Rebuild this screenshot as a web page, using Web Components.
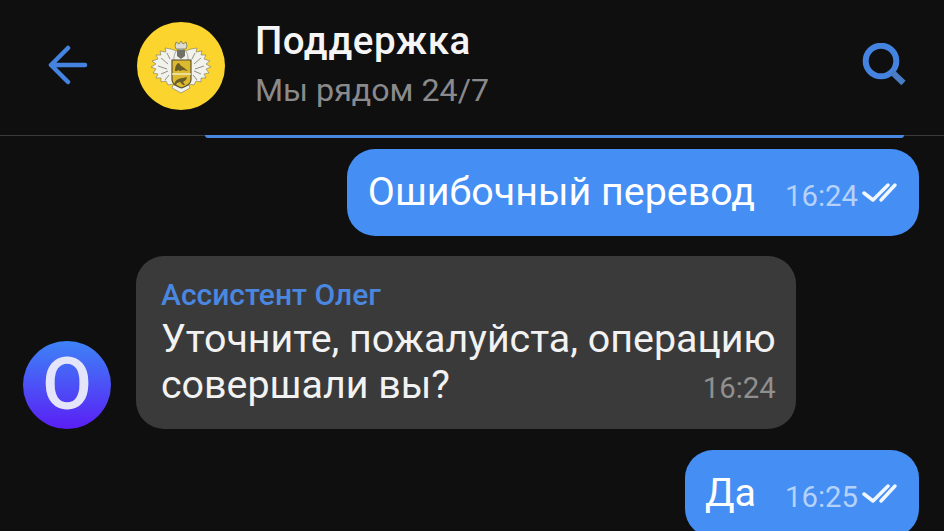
<!DOCTYPE html>
<html>
<head>
<meta charset="utf-8">
<style>
    html, body { margin: 0; padding: 0; height: 531px; overflow: hidden; background: #0f0f10; }
    body { font-family: Roboto, "Noto Sans", sans-serif; display: flex; flex-direction: column; }
</style>
</head>
<body>
<chat-header title="Поддержка" status="Мы рядом 24/7"></chat-header>
<chat-list>
    <chat-strip></chat-strip>
    <chat-bubble mine time="16:24">Ошибочный перевод</chat-bubble>
    <chat-row>
        <bot-avatar slot="avatar">О</bot-avatar>
        <chat-bubble time="16:24" sender="Ассистент Олег">Уточните, пожалуйста, операцию<br>совершали вы?</chat-bubble>
    </chat-row>
    <chat-bubble mine time="16:25" style="--lead: 20px; --meta-gap: 29px">Да</chat-bubble>
</chat-list>

<script>
// Bank crest, drawn by hand
const crest = `
<svg width="88" height="88" viewBox="0 0 88 88">
    <circle cx="44" cy="44" r="44" fill="#fbd52d"/>
    <g fill="#f2f2ec" stroke="#77776a" stroke-width=".6">
        <path d="M34 27l-6-1 1 4-6-1 1 4-5 0 2 4-6 2 4 3-5 3 5 2-3 4 5 1-2 4 5 0 0 4 5-1 2 4 5-1 3 3 3 1V30z"/>
        <path d="M54 27l6-1-1 4 6-1-1 4 5 0-2 4 6 2-4 3 5 3-5 2 3 4-5 1 2 4-5 0 0 4-5-1-2 4-5-1-3 3-3 1V30z"/>
        <path d="M35 66l9 5 9-5-1-3H36z"/>
        <path d="M37 36c0-5 3-9 7-9s7 4 7 9v3H37z"/>
    </g>
    <path d="M38 24l1-4 3 2 2-3 2 3 3-2 1 4-1 3H39z" fill="#dcdcd2" stroke="#55554c" stroke-width=".6"/>
    <path d="M40 28h8v6l-4 3-4-3z" fill="#707066"/>
    <g stroke="#86867a" stroke-width=".9" fill="none">
        <path d="M30 31l3 6M24 36l7 6M21 44l9 3M24 52l7-3M28 58l4-5M58 31l-3 6M64 36l-7 6M67 44l-9 3M64 52l-7-3M60 58l-4-5"/>
    </g>
    <path d="M35 38h19v20c0 4-4 6-9.500 8-5.500-2-9.500-4-9.500-8z" fill="#dcb92e" stroke="#4f4a2c" stroke-width="1.100"/>
    <path d="M35 52h19" stroke="#f5f1d2" stroke-width="1.300"/>
    <path d="M38 49c0-5 2-8 4-8 1 2 2 3 4 4l5 4-5-1-3 1-2-1-1 1z" fill="#6a5c25"/>
    <path d="M38 60c2-3 5-4 8-4l4-1-1 3-3 2 2 3h-2l-3-3-3 1-1 2h-2z" fill="#6a5c25"/>
</svg>`;

// Header bar
const headerTemplate = document.createElement('template');
headerTemplate.innerHTML = `
    <style>
        :host{
            display: flex;
            flex: none;
            align-items: center;
            height: 136px;
            box-sizing: border-box;
            border-bottom: 1px solid #3b3b3c;
            padding: 0 38px 3px 47px;
        }
        .back{ width: 42px; height: 42px; flex: none; display: block; }
        .logo{ width: 88px; height: 88px; flex: none; margin-left: 48px; display: block; }
        .text{ flex: 1; margin-left: 30px; margin-bottom: 3px; }
        .title{ color: #f5f5f5; font-size: 38.5px; font-weight: 500; line-height: 44px; letter-spacing: .5px; }
        .status{ color: #8a8a8c; font-size: 32.200px; line-height: 40px; margin-top: 7px; }
        .search{ width: 46px; height: 46px; flex: none; display: block; }
    </style>
    <svg class="back" viewBox="0 0 42 42" fill="none" stroke="#4583e0" stroke-width="4.500" stroke-linecap="round" stroke-linejoin="round">
        <path d="M4 20H38M21 3L4 20L21 37"/>
    </svg>
    <div class="logo">${crest}</div>
    <div class="text">
        <div class="title"></div>
        <div class="status"></div>
    </div>
    <svg class="search" viewBox="0 0 46 46" fill="none" stroke="#4583e0">
        <circle cx="21" cy="18" r="15.300" stroke-width="6"/>
        <path d="M32 29L43.500 40" stroke-width="6" stroke="#4a7cc4"/>
    </svg>
`;

class ChatHeader extends HTMLElement {
    constructor() {
        super();
        this.attachShadow({ mode: 'open' });
        this.shadowRoot.appendChild(headerTemplate.content.cloneNode(true));
        this.shadowRoot.querySelector('.title').textContent = this.getAttribute('title');
        this.shadowRoot.querySelector('.status').textContent = this.getAttribute('status');
    }
}
window.customElements.define('chat-header', ChatHeader);

// Scroll area, starts on the header's divider
class ChatList extends HTMLElement {
    constructor() {
        super();
        this.attachShadow({ mode: 'open' }).innerHTML = `
            <style>
                :host{
                    display: flex;
                    flex-direction: column;
                    align-items: flex-end;
                    flex: 1;
                    min-height: 0;
                    overflow: hidden;
                    margin-top: -1px;
                    padding-right: 25px;
                }
            </style>
            <slot></slot>
        `;
    }
}
window.customElements.define('chat-list', ChatList);

// Bottom edge of a message scrolled under the header
class ChatStrip extends HTMLElement {
    constructor() {
        super();
        this.attachShadow({ mode: 'open' }).innerHTML = `
            <style>
                :host{
                    display: block;
                    align-self: stretch;
                    flex: none;
                    height: 3px;
                    margin: 0 15px 11px 205px;
                    background: #4a87e0;
                    border-radius: 0 0 12px 12px;
                }
            </style>
        `;
    }
}
window.customElements.define('chat-strip', ChatStrip);

// Row with avatar and an incoming message
class ChatRow extends HTMLElement {
    constructor() {
        super();
        this.attachShadow({ mode: 'open' }).innerHTML = `
            <style>
                :host{
                    display: flex;
                    align-self: stretch;
                    flex: none;
                    align-items: flex-end;
                    gap: 25px;
                    padding-left: 23px;
                    margin: 20px 0 21px;
                }
            </style>
            <slot name="avatar"></slot>
            <slot></slot>
        `;
    }
}
window.customElements.define('chat-row', ChatRow);

class BotAvatar extends HTMLElement {
    constructor() {
        super();
        this.attachShadow({ mode: 'open' }).innerHTML = `
            <style>
                :host{
                    display: flex;
                    flex: none;
                    align-items: center;
                    justify-content: center;
                    width: 88px;
                    height: 88px;
                    border-radius: 50%;
                    background: linear-gradient(#3d83f7, #5a1ff5);
                    color: #e4e4fa;
                    font-size: 72px;
                    font-weight: 500;
                    line-height: 1;
                }
            </style>
            <slot></slot>
        `;
    }
}
window.customElements.define('bot-avatar', BotAvatar);

// Message bubble
const bubbleTemplate = document.createElement('template');
bubbleTemplate.innerHTML = `
    <style>
        :host{
            display: block;
            flex: none;
            box-sizing: border-box;
            background: #3a3a3b;
            border-radius: 28px;
            color: #f2f2f2;
            padding: 22px 20px 21px 25px;
            font-size: 39.400px;
            line-height: 46px;
            position: relative;
        }
        :host([mine]){
            background: #458ef3;
            color: #fff;
            display: flex;
            align-items: center;
            height: 87px;
            padding: 0 21px 2px var(--lead, 21px);
        }
        .sender{ color: #4a87e0; font-size: 30px; font-weight: 500; line-height: 34px; margin-bottom: 4px; }
        .sender:empty{ display: none; }
        .meta{ color: #8f8f90; font-size: 29.300px; line-height: 34px; display: flex; align-items: center; gap: 4px; }
        :host([mine]) .meta{ color: #b4d2fb; margin-left: var(--meta-gap, 30px); margin-top: 8px; }
        :host(:not([mine])) .meta{ position: absolute; right: 20px; bottom: 24px; }
        svg{ display: none; width: 36px; height: 24px; }
        :host([mine]) svg{ display: block; margin-top: -8px; }
    </style>
    <div class="sender"></div>
    <div class="body"><slot></slot></div>
    <div class="meta">
        <span class="time"></span>
        <svg viewBox="0 0 36 24" fill="none" stroke="#f2f7ff" stroke-width="3.500" stroke-linecap="round" stroke-linejoin="round">
            <path d="M2 13L11 20L26 5"/>
            <path d="M19 20L33 5"/>
        </svg>
    </div>
`;

class ChatBubble extends HTMLElement {
    constructor() {
        super();
        this.attachShadow({ mode: 'open' });
        this.shadowRoot.appendChild(bubbleTemplate.content.cloneNode(true));
        this.shadowRoot.querySelector('.time').textContent = this.getAttribute('time');
        this.shadowRoot.querySelector('.sender').textContent = this.getAttribute('sender') || '';
    }
}
window.customElements.define('chat-bubble', ChatBubble);
</script>
</body>
</html>
